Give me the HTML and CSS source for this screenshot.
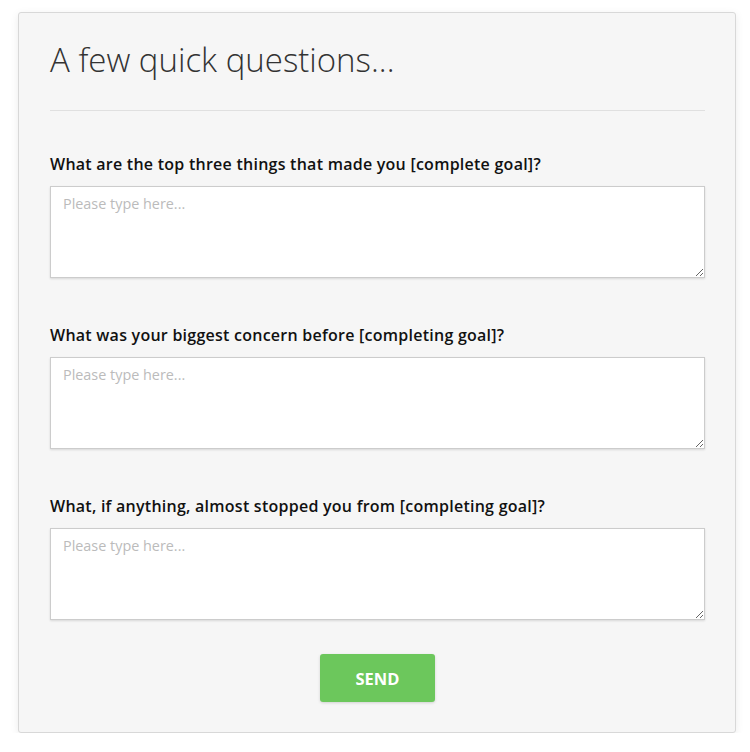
FILE: index.html
```html
<!DOCTYPE html>
<html lang="en">
<head>
    <meta charset="UTF-8">
    <meta name="viewport" content="width=device-width, initial-scale=1.0">
    <title>A few quick questions</title>
    <link rel="stylesheet" href="styles.css">
</head>
<body>
    <div class="card">
        <h1>A few quick questions...</h1>
        <hr>

        <div class="question">
            <label for="q1">What are the top three things that made you [complete goal]?</label>
            <textarea id="q1" placeholder="Please type here..."></textarea>
        </div>

        <div class="question">
            <label for="q2">What was your biggest concern before [completing goal]?</label>
            <textarea id="q2" placeholder="Please type here..."></textarea>
        </div>

        <div class="question">
            <label for="q3">What, if anything, almost stopped you from [completing goal]?</label>
            <textarea id="q3" placeholder="Please type here..."></textarea>
        </div>

        <div class="actions">
            <button class="send-btn">SEND</button>
        </div>
    </div>
</body>
</html>
```

FILE: styles.css
```css
body {
    font-family: 'Open Sans', 'Liberation Sans', sans-serif;
    margin: 0;
    background-color: #fff;
}
.card {
    width: 718px;
    box-sizing: border-box;
    margin: 12px 0 0 18px;
    padding: 27px 30px 30px 31px;
    background-color: #f6f6f6;
    border: 1px solid #d8d8d8;
    border-radius: 3px;
    box-shadow: 0 2px 8px rgba(0,0,0,0.08);
}
h1 {
    margin: 0;
    font-size: 33px;
    font-weight: 300;
    line-height: 40px;
    color: #333;
}
hr {
    margin: 30px 0 43px;
    border: none;
    border-top: 1px solid #e0e0e0;
}
.question + .question {
    margin-top: 47px;
}
.question label {
    display: block;
    margin-bottom: 12px;
    font-size: 16px;
    font-weight: 600;
    line-height: 20px;
    letter-spacing: 0.25px;
    color: #111;
}
.question textarea {
    display: block;
    width: 100%;
    height: 92px;
    box-sizing: border-box;
    padding: 7px 12px;
    font-family: 'Open Sans', 'Liberation Sans', sans-serif;
    font-size: 14.4px;
    border: 1px solid #ccc;
    border-radius: 0;
    background-color: #fff;
    box-shadow: 0 1px 2px rgba(0,0,0,0.12);
}
.question textarea::placeholder {
    color: #bbb;
}
.actions {
    margin-top: 34px;
    text-align: center;
}
.send-btn {
    width: 115px;
    height: 48px;
    background-color: #6cc75c;
    color: white;
    border: none;
    border-radius: 3px;
    font-family: 'Open Sans', 'Liberation Sans', sans-serif;
    font-size: 16.5px;
    font-weight: 700;
    box-shadow: 0 1px 3px rgba(0,0,0,0.15);
    cursor: pointer;
}
```
